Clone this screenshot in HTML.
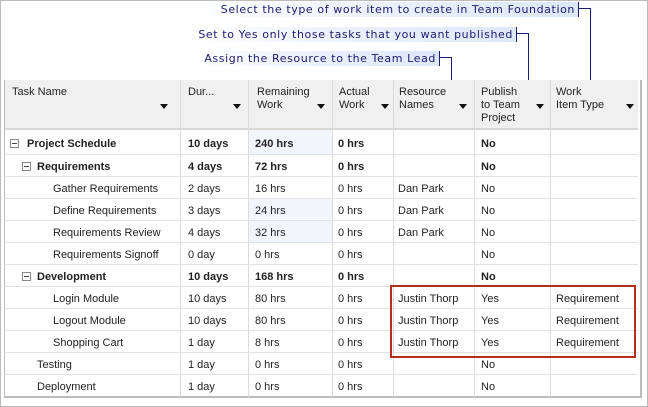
<!DOCTYPE html>
<html><head><meta charset="utf-8"><style>
*{margin:0;padding:0;box-sizing:border-box}
body{width:648px;height:407px;overflow:hidden;background:#fff;font-family:"Liberation Sans",sans-serif;font-size:11px;color:#222;position:relative}
.frame{position:absolute;left:0;top:0;width:648px;height:407px;border:1px solid #bbb}
.co{position:absolute;height:15px;line-height:15px;color:#1c1c6e;font-family:"DejaVu Sans",sans-serif;font-size:11px;letter-spacing:0.6px;padding-right:3px;text-align:right;white-space:nowrap;background:linear-gradient(90deg,#fff 0%,#eef3fc 40%,#dce7f8 100%)}
.ln{position:absolute;background:#1c1c6e}
.tbl{position:absolute;left:4px;top:80px;width:638px;height:318px;border-right:2px solid #bbb;border-bottom:2px solid #bbb}
.hd{position:absolute;top:80px;height:50px;background:#f0f0f0;border-bottom:2px solid #d8d8d8}
.c{position:absolute;white-space:nowrap}
.r .c{margin-top:1px}
.vl{position:absolute;top:80px;width:1px;background:#dcdcdc;height:317px}
.hl{position:absolute;left:4px;width:634px;height:1px;background:#e2e2e2}
.tri{position:absolute;width:0;height:0;border-left:4px solid transparent;border-right:4px solid transparent;border-top:5px solid #111}
.b{font-weight:bold}
.box{position:absolute;width:9px;height:9px;border:1px solid #888;background:#fff}
.box:after{content:"";position:absolute;left:1px;top:3px;width:5px;height:1px;background:#444}
</style></head><body>
<div class="frame"></div>
<div class="co" style="left:190px;top:2px;width:388px">Select the type of work item to create in Team Foundation</div>
<div class="co" style="left:190px;top:27px;width:326px">Set to Yes only those tasks that you want published</div>
<div class="co" style="left:190px;top:51px;width:249px">Assign the Resource to the Team Lead</div>
<div class="ln" style="left:578px;top:2px;width:1px;height:15px"></div>
<div class="ln" style="left:578px;top:8px;width:13px;height:1px"></div>
<div class="ln" style="left:590px;top:8px;width:1px;height:73px"></div>
<div class="ln" style="left:516px;top:27px;width:1px;height:15px"></div>
<div class="ln" style="left:516px;top:33px;width:13px;height:1px"></div>
<div class="ln" style="left:528px;top:33px;width:1px;height:48px"></div>
<div class="ln" style="left:439px;top:51px;width:1px;height:15px"></div>
<div class="ln" style="left:439px;top:57px;width:13px;height:1px"></div>
<div class="ln" style="left:451px;top:57px;width:1px;height:24px"></div>

<div class="hd" style="left:4px;width:634px"></div>
<div style="position:absolute;left:248px;top:130px;width:84px;height:24px;background:#f1f6fd"></div>
<div style="position:absolute;left:248px;top:198px;width:84px;height:44px;background:#f1f6fd"></div>
<div class="tbl"></div>
<div class="vl" style="left:4px;background:#bbb"></div>
<div class="vl" style="left:180px"></div><div class="vl" style="left:248px"></div>
<div class="vl" style="left:332px"></div><div class="vl" style="left:393px"></div>
<div class="vl" style="left:474px"></div><div class="vl" style="left:550px"></div>
<div class="hl" style="top:154px"></div><div class="hl" style="top:176px"></div>
<div class="hl" style="top:198px"></div><div class="hl" style="top:220px"></div>
<div class="hl" style="top:242px"></div><div class="hl" style="top:264px"></div>
<div class="hl" style="top:286px"></div><div class="hl" style="top:308px"></div>
<div class="hl" style="top:330px"></div><div class="hl" style="top:352px"></div>
<div class="hl" style="top:374px"></div>

<div class="c" style="left:12px;top:86px;line-height:13px">Task Name</div>
<div class="c" style="left:188px;top:86px;line-height:13px">Dur...</div>
<div class="c" style="left:257px;top:86px;line-height:13px">Remaining<br>Work</div>
<div class="c" style="left:339px;top:86px;line-height:13px">Actual<br>Work</div>
<div class="c" style="left:399px;top:86px;line-height:13px">Resource<br>Names</div>
<div class="c" style="left:481px;top:86px;line-height:13px">Publish<br>to Team<br>Project</div>
<div class="c" style="left:556px;top:86px;line-height:13px">Work<br>Item Type</div>
<div class="tri" style="left:160px;top:104px"></div>
<div class="tri" style="left:233px;top:104px"></div>
<div class="tri" style="left:317px;top:104px"></div>
<div class="tri" style="left:381px;top:104px"></div>
<div class="tri" style="left:459px;top:104px"></div>
<div class="tri" style="left:536px;top:104px"></div>
<div class="tri" style="left:626px;top:104px"></div>

<div class="box" style="left:10px;top:139px"></div>
<div class="box" style="left:22px;top:162px"></div>
<div class="box" style="left:22px;top:272px"></div>

<div class="r">
<div class="c b" style="left:27px;top:137px">Project Schedule</div><div class="c b" style="left:188px;top:137px">10 days</div><div class="c b" style="left:255px;top:137px">240 hrs</div><div class="c b" style="left:338px;top:137px">0 hrs</div><div class="c b" style="left:481px;top:137px">No</div>
<div class="c b" style="left:37px;top:160px">Requirements</div><div class="c b" style="left:188px;top:160px">4 days</div><div class="c b" style="left:255px;top:160px">72 hrs</div><div class="c b" style="left:338px;top:160px">0 hrs</div><div class="c b" style="left:481px;top:160px">No</div>
<div class="c" style="left:53px;top:182px">Gather Requirements</div><div class="c" style="left:188px;top:182px">2 days</div><div class="c" style="left:255px;top:182px">16 hrs</div><div class="c" style="left:338px;top:182px">0 hrs</div><div class="c" style="left:398px;top:182px">Dan Park</div><div class="c" style="left:481px;top:182px">No</div>
<div class="c" style="left:53px;top:204px">Define Requirements</div><div class="c" style="left:188px;top:204px">3 days</div><div class="c" style="left:255px;top:204px">24 hrs</div><div class="c" style="left:338px;top:204px">0 hrs</div><div class="c" style="left:398px;top:204px">Dan Park</div><div class="c" style="left:481px;top:204px">No</div>
<div class="c" style="left:53px;top:226px">Requirements Review</div><div class="c" style="left:188px;top:226px">4 days</div><div class="c" style="left:255px;top:226px">32 hrs</div><div class="c" style="left:338px;top:226px">0 hrs</div><div class="c" style="left:398px;top:226px">Dan Park</div><div class="c" style="left:481px;top:226px">No</div>
<div class="c" style="left:53px;top:248px">Requirements Signoff</div><div class="c" style="left:188px;top:248px">0 day</div><div class="c" style="left:255px;top:248px">0 hrs</div><div class="c" style="left:338px;top:248px">0 hrs</div><div class="c" style="left:481px;top:248px">No</div>
<div class="c b" style="left:37px;top:270px">Development</div><div class="c b" style="left:188px;top:270px">10 days</div><div class="c b" style="left:255px;top:270px">168 hrs</div><div class="c b" style="left:338px;top:270px">0 hrs</div><div class="c b" style="left:481px;top:270px">No</div>
<div class="c" style="left:53px;top:292px">Login Module</div><div class="c" style="left:188px;top:292px">10 days</div><div class="c" style="left:255px;top:292px">80 hrs</div><div class="c" style="left:338px;top:292px">0 hrs</div><div class="c" style="left:398px;top:292px">Justin Thorp</div><div class="c" style="left:481px;top:292px">Yes</div><div class="c" style="left:556px;top:292px">Requirement</div>
<div class="c" style="left:53px;top:314px">Logout Module</div><div class="c" style="left:188px;top:314px">10 days</div><div class="c" style="left:255px;top:314px">80 hrs</div><div class="c" style="left:338px;top:314px">0 hrs</div><div class="c" style="left:398px;top:314px">Justin Thorp</div><div class="c" style="left:481px;top:314px">Yes</div><div class="c" style="left:556px;top:314px">Requirement</div>
<div class="c" style="left:53px;top:336px">Shopping Cart</div><div class="c" style="left:188px;top:336px">1 day</div><div class="c" style="left:255px;top:336px">8 hrs</div><div class="c" style="left:338px;top:336px">0 hrs</div><div class="c" style="left:398px;top:336px">Justin Thorp</div><div class="c" style="left:481px;top:336px">Yes</div><div class="c" style="left:556px;top:336px">Requirement</div>
<div class="c" style="left:37px;top:358px">Testing</div><div class="c" style="left:188px;top:358px">1 day</div><div class="c" style="left:255px;top:358px">0 hrs</div><div class="c" style="left:338px;top:358px">0 hrs</div><div class="c" style="left:481px;top:358px">No</div>
<div class="c" style="left:37px;top:380px">Deployment</div><div class="c" style="left:188px;top:380px">1 day</div><div class="c" style="left:255px;top:380px">0 hrs</div><div class="c" style="left:338px;top:380px">0 hrs</div><div class="c" style="left:481px;top:380px">No</div>
</div>

<div style="position:absolute;left:390px;top:285px;width:246px;height:73px;border:2px solid #b5301a"></div>
</body></html>
